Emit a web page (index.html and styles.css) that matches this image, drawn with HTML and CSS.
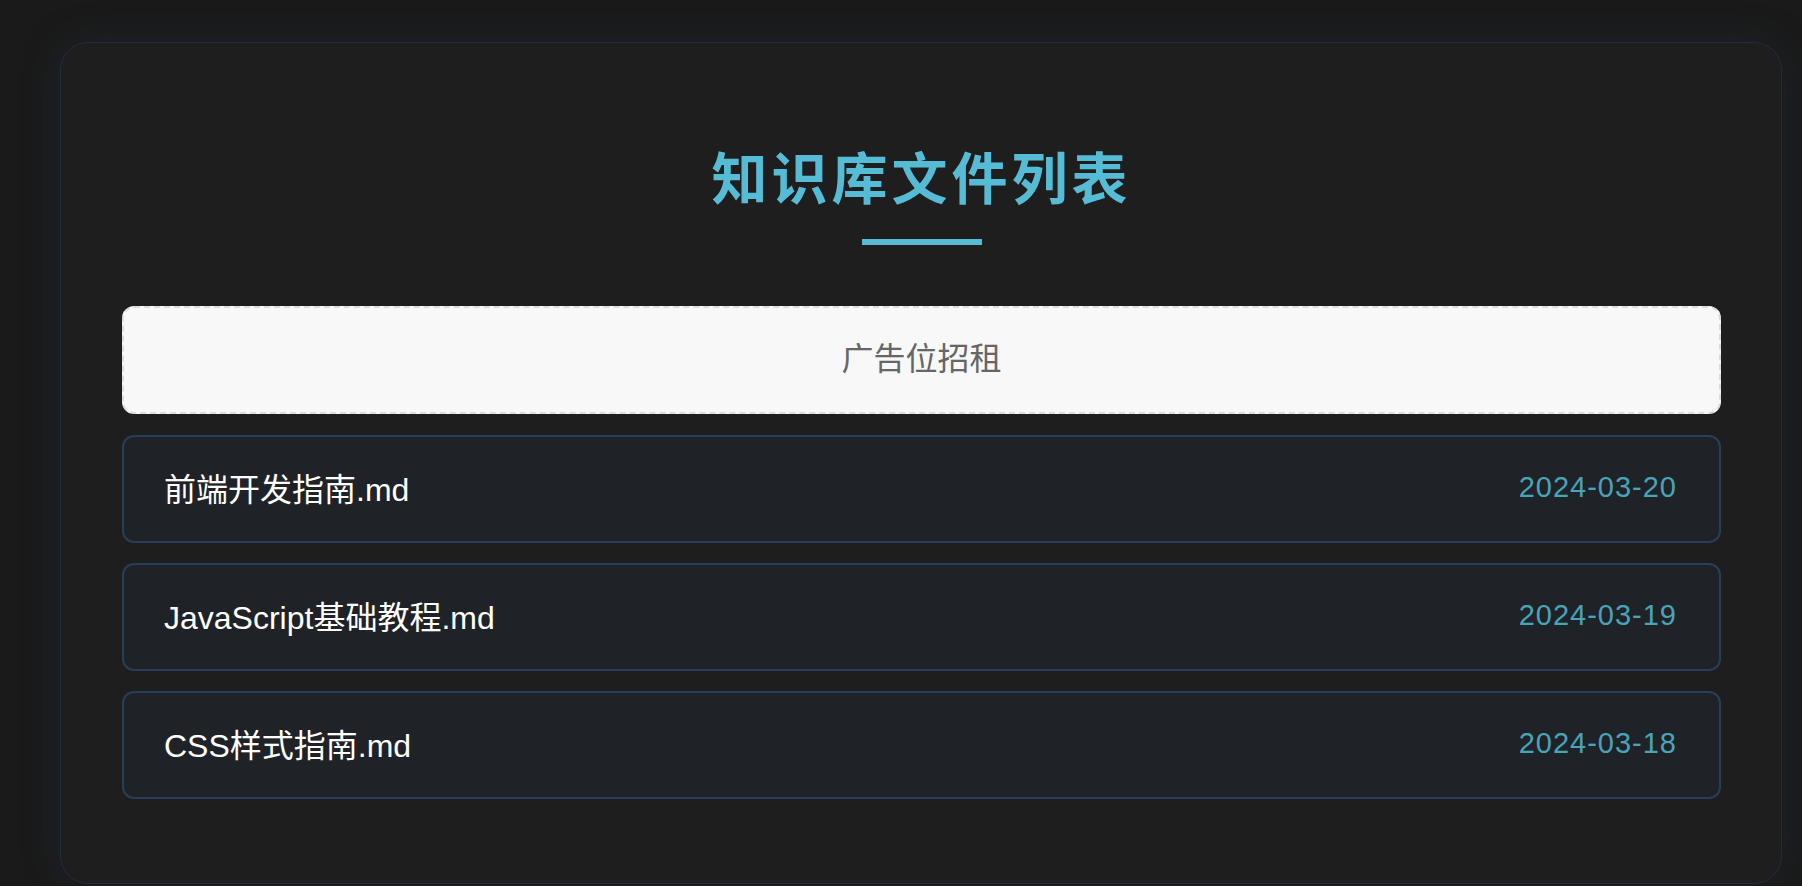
FILE: index.html
```html
<!DOCTYPE html>
<html lang="zh-CN">

<head>
    <meta charset="UTF-8">
    <meta name="viewport" content="width=device-width, initial-scale=1.0">
    <title>知识库文件列表</title>
    <link rel="stylesheet" href="styles.css">
</head>

<body>
    <div class="container">
        <div class="header">
            <h1 class="title">知识库文件列表</h1>
            <div class="title-line"></div>
        </div>
        <div class="ad">广告位招租</div>
        <ul class="file-list">
            <li class="file-item">
                <span class="file-name">前端开发指南.md</span>
                <span class="file-date">2024-03-20</span>
            </li>
            <li class="file-item">
                <span class="file-name">JavaScript基础教程.md</span>
                <span class="file-date">2024-03-19</span>
            </li>
            <li class="file-item">
                <span class="file-name">CSS样式指南.md</span>
                <span class="file-date">2024-03-18</span>
            </li>
        </ul>
    </div>
</body>

</html>
```

FILE: styles.css
```css
* {
    margin: 0;
    padding: 0;
    box-sizing: border-box;
    font-family: "Liberation Sans", "Noto Sans CJK SC", sans-serif;
}

body {
    background-color: #1a1a1a;
}

.container {
    height: 842px;
    margin: 42px 20px 0 60px;
    padding: 60px 60px 0 61px;
    background-color: #1e1e1e;
    border: 1px solid #1f2d3e;
    border-radius: 28px;
    box-shadow: 0 0 36px rgba(35, 55, 80, 0.35);
}

.header {
    padding-top: 43px;
    margin-bottom: 61px;
    text-align: center;
}

.title {
    font-size: 56px;
    line-height: 68px;
    font-weight: bold;
    letter-spacing: 4px;
    color: #56bcd6;
}

.title-line {
    width: 120px;
    height: 6px;
    margin: 25px auto 0;
    background-color: #56bcd6;
}

.ad {
    height: 108px;
    line-height: 102px;
    text-align: center;
    font-size: 32px;
    color: #666;
    background-color: #f8f8f8;
    border: 2px dashed #dcdcdc;
    border-radius: 12px;
    margin-bottom: 21px;
}

.file-list {
    list-style: none;
}

.file-item {
    display: flex;
    justify-content: space-between;
    align-items: center;
    height: 108px;
    padding: 0 42px 4px 40px;
    margin-bottom: 20px;
    background-color: #1f2328;
    border: 2px solid #273f5a;
    border-radius: 12px;
}

.file-name {
    font-size: 32px;
    color: #fff;
}

.file-date {
    font-size: 29px;
    letter-spacing: 1px;
    color: #4aa3b9;
}
```
